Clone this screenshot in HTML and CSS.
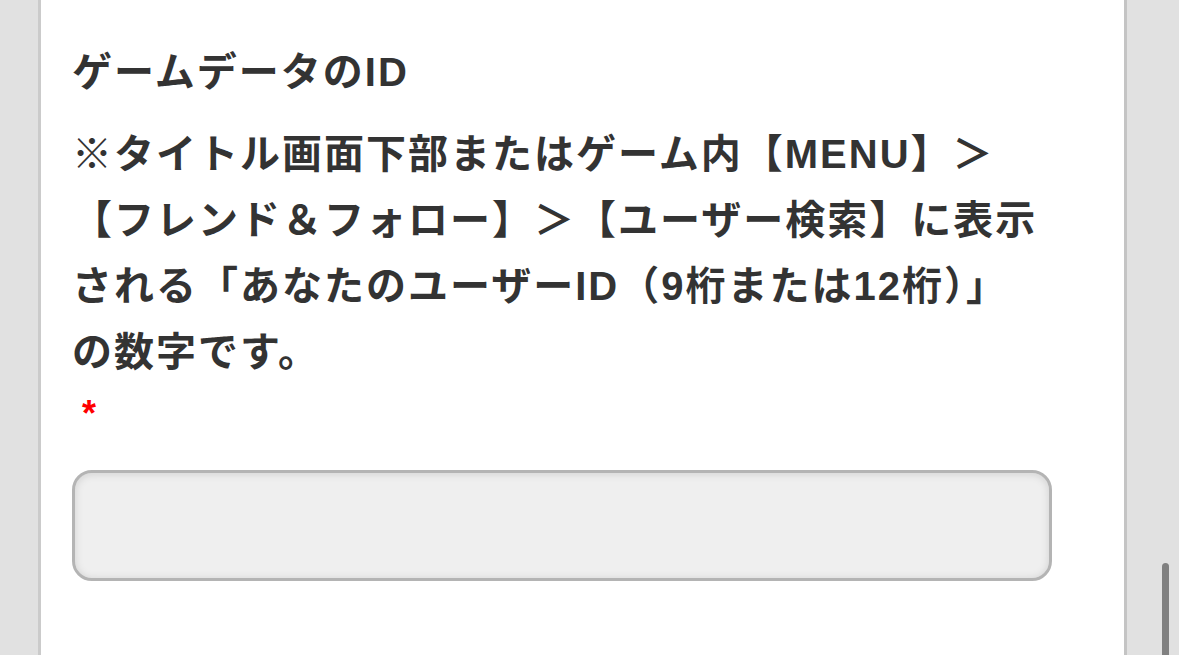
FILE: index.html
```html
<!DOCTYPE html>
<html lang="ja">
<head>
<meta charset="utf-8">
<title>ゲームデータのID</title>
<link rel="stylesheet" href="styles.css">
</head>
<body>
<div class="page">
  <main class="panel">
    <div class="field">
      <div class="field-title">ゲームデータのID</div>
      <div class="field-desc">※タイトル画面下部またはゲーム内【MENU】＞<br>【フレンド＆フォロー】＞【ユーザー検索】に表示<br>される「あなたのユーザーID（9桁または12桁）」<br>の数字です。</div>
      <div class="field-required">*</div>
      <input class="field-input" type="text" aria-label="ゲームデータのID">
    </div>
  </main>
  <div class="scroll-track"></div>
</div>
<div class="scroll-thumb"></div>
</body>
</html>
```
FILE: styles.css
```css
html, body {
  margin: 0;
  padding: 0;
  height: 100%;
  overflow: hidden;
}

body {
  background: #e1e1e1;
  font-family: "Liberation Sans", "Noto Sans CJK JP", sans-serif;
  color: #333333;
}

.page {
  display: flex;
  height: 100%;
}

.panel {
  margin-left: 38px;
  flex: 0 0 1089px;
  background: #ffffff;
  border-left: 3px solid #cbcbcb;
  border-right: 3px solid #c4c4c4;
  padding: 39px 0 0 31px;
  box-sizing: border-box;
}

.field {
  width: 980px;
  display: flex;
  flex-direction: column;
}

.field-title,
.field-desc {
  font-size: 40px;
  font-weight: 700;
  letter-spacing: 2px;
  line-height: 66px;
  white-space: nowrap;
}

.field-desc {
  margin-top: 16px;
}

.field-required {
  color: #ff0000;
  font-size: 36px;
  font-weight: 700;
  line-height: 48px;
  height: 48px;
  padding-left: 10px;
  padding-top: 5px;
  box-sizing: border-box;
}

.field-input {
  margin-top: 37px;
  width: 980px;
  height: 111px;
  box-sizing: border-box;
  border: 3px solid #b4b4b4;
  border-radius: 20px;
  background: #efefef;
  box-shadow: inset 0 1px 8px rgba(0, 0, 0, 0.13);
  outline: none;
  font-size: 34px;
  padding: 0 20px;
}

.scroll-track {
  flex: 0 0 45px;
  background: #e1e1e1;
}

.scroll-thumb {
  position: absolute;
  left: 1162px;
  top: 563px;
  width: 7px;
  height: 120px;
  border-radius: 4px;
  background: #808080;
}
```
